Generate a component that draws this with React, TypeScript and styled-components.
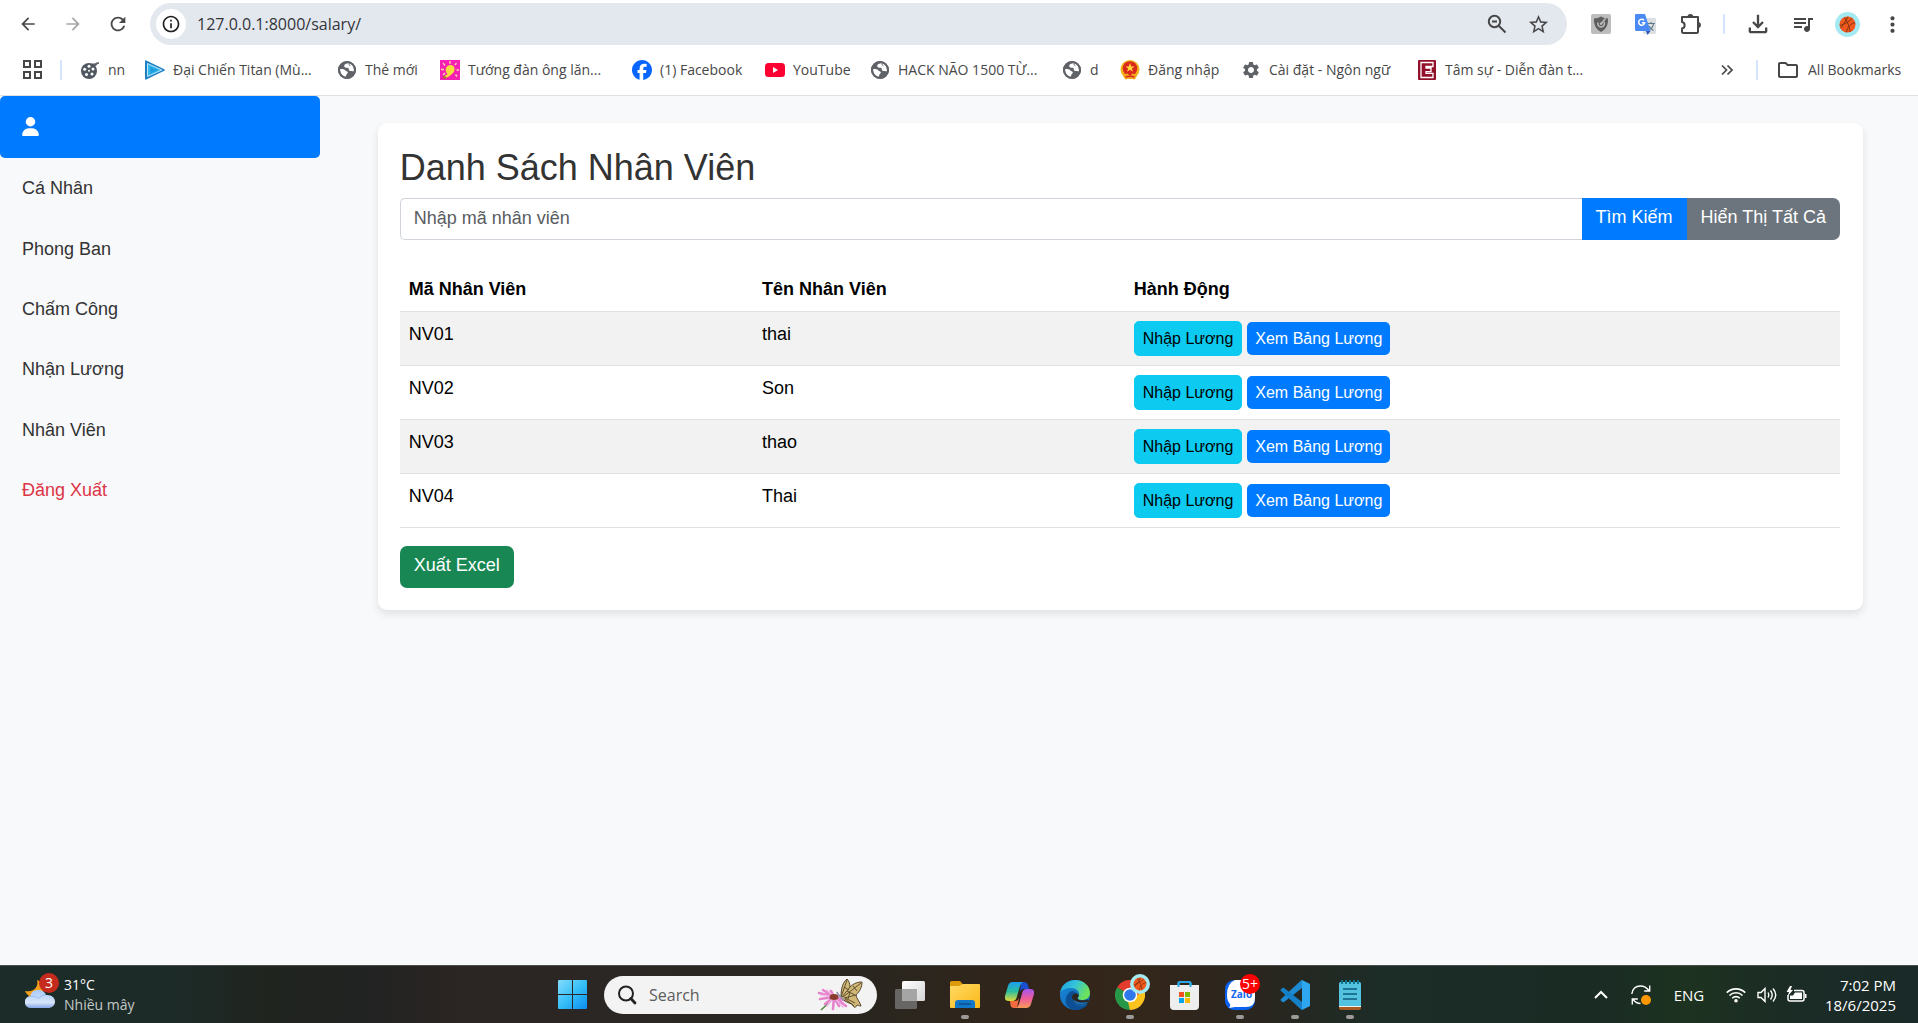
import React from "react";
import styled, { createGlobalStyle, css } from "styled-components";
import {
  MdArrowBack,
  MdArrowForward,
  MdRefresh,
  MdInfoOutline,
  MdStarBorder,
  MdMoreVert,
  MdOutlineFileDownload,
  MdQueueMusic,
  MdSettings,
  MdOutlineFolder,
} from "react-icons/md";
import { FaUser, FaFacebook } from "react-icons/fa6";

const UI_FONT = `"Open Sans", "Noto Sans", sans-serif`;
const PAGE_FONT = `"Liberation Sans", Arial, sans-serif`;

const GlobalStyle = createGlobalStyle`
  *, *::before, *::after { box-sizing: border-box; }
  body { margin: 0; background: #f8f9fb; }
  button, input { font: inherit; color: inherit; margin: 0; }
  svg { display: block; flex: none; }
`;

const Screen = styled.div`
  display: flex;
  flex-direction: column;
  min-height: 100vh;
  font-family: ${PAGE_FONT};
`;

/* ---------- browser chrome ---------- */

const Browser = styled.header`
  background: #fff;
  border-bottom: 1px solid #dfe1e3;
  font-family: ${UI_FONT};
  color: #474747;
`;

const NavBar = styled.div`
  display: flex;
  align-items: center;
  height: 48px;
  padding: 0 3px 0 14px;
`;

const IconButton = styled.button<{ $w?: number; $color?: string }>`
  display: flex;
  align-items: center;
  justify-content: center;
  width: ${(p) => p.$w ?? 45}px;
  height: 32px;
  padding: 0;
  border: 0;
  background: none;
  color: ${(p) => p.$color ?? "#474747"};
`;

const AddressBar = styled.div`
  display: flex;
  flex: 1;
  align-items: center;
  height: 42px;
  margin-left: 18px;
  padding: 0 8px 0 6px;
  border-radius: 21px;
  background: #e3e7ee;
`;

const SiteInfo = styled.button`
  display: flex;
  align-items: center;
  justify-content: center;
  width: 30px;
  height: 30px;
  padding: 0;
  border: 0;
  border-radius: 50%;
  background: #fff;
  color: #1f1f1f;
`;

const UrlInput = styled.input`
  flex: 1;
  min-width: 0;
  padding: 0 0 0 11px;
  border: 0;
  outline: 0;
  background: none;
  font-size: 16px;
  line-height: 24px;
  color: #33353a;
`;

const Separator = styled.span<{ $m: string }>`
  width: 2px;
  height: 20px;
  margin: ${(p) => p.$m};
  border-radius: 1px;
  background: #d3e3fd;
`;

const Extensions = styled.div`
  display: flex;
  align-items: center;
  margin-left: 11px;
`;

const BookmarkBar = styled.nav`
  display: flex;
  align-items: center;
  height: 47px;
  padding: 0 16px 4px 10px;
  font-size: 14px;
  line-height: 20px;
`;

const BookmarkList = styled.div`
  display: flex;
  flex: 1;
  gap: 21px;
`;

const Bookmark = styled.a`
  display: flex;
  align-items: center;
  gap: 8px;
  color: inherit;
  text-decoration: none;
  white-space: nowrap;
`;

const BookmarkIcon = styled.span`
  display: flex;
  align-items: center;
  justify-content: center;
  width: 20px;
  height: 20px;
`;

const BookmarkLabel = styled.span<{ $w: number }>`
  width: ${(p) => p.$w}px;
`;

/* ---------- page ---------- */

const Page = styled.div`
  display: flex;
  flex: 1;
  align-items: flex-start;
  background: #f8f9fb;
  font-size: 18px;
  line-height: 26px;
`;

const Sidebar = styled.nav`
  display: flex;
  flex: none;
  flex-direction: column;
  width: calc(100% / 6);
  height: 424px;
`;

const SideLink = styled.a<{ $active?: boolean; $danger?: boolean }>`
  display: flex;
  flex: 1;
  align-items: center;
  padding: 0 22px;
  border-radius: 5px;
  text-decoration: none;
  color: ${(p) => (p.$danger ? "#dc3545" : "#333")};
  ${(p) =>
    p.$active &&
    css`
      padding: 0 21px 2px;
      background: #007bff;
      color: #fff;
    `}
`;

const Main = styled.main`
  flex: 1;
  min-width: 0;
  padding: 27px 55px 27px 58px;
`;

const Card = styled.section`
  padding: 22px 23px 22px 22px;
  border-radius: 9px;
  background: #fff;
  box-shadow: 0 4px 9px rgba(0, 0, 0, 0.1);
`;

const Title = styled.h1`
  margin: 0 0 8px;
  font-size: 36px;
  font-weight: 400;
  line-height: 45px;
  color: #333;
`;

const SearchForm = styled.form`
  display: flex;
  height: 42px;
  margin-bottom: 27px;
`;

const CodeInput = styled.input`
  flex: 1;
  min-width: 0;
  padding: 0 13px 3px;
  border: 1px solid #ced4da;
  border-right: 0;
  border-radius: 5px 0 0 5px;
  outline: 0;
  background: #fff;
  &::placeholder {
    color: #595c5f;
    opacity: 1;
  }
`;

const tones = {
  primary: css`
    background: #007bff;
    color: #fff;
  `,
  secondary: css`
    background: #6c757d;
    color: #fff;
  `,
  info: css`
    border: 1px solid #0dcaf0;
    background: #0dcaf0;
    color: #000;
  `,
  success: css`
    background: #198754;
    color: #fff;
  `,
};

const Button = styled.button<{ $tone: keyof typeof tones }>`
  padding: 0 14px 3px;
  border: 0;
  border-radius: 7px;
  line-height: 39px;
  white-space: nowrap;
  ${(p) => tones[p.$tone]}
`;

const GroupButton = styled(Button)`
  border-radius: 0;
  &:last-child {
    border-radius: 0 7px 7px 0;
  }
`;

const RowButton = styled(Button)`
  padding: 0 8px;
  border-radius: 5px;
  font-size: 16px;
  line-height: 33px;
`;

const Table = styled.table`
  width: 100%;
  margin-bottom: 18px;
  border-spacing: 0;
  color: #000;
`;

const cell = css`
  padding: 9px;
  border-bottom: 1px solid #dee2e6;
  text-align: left;
  vertical-align: top;
`;

const HeadCell = styled.th`
  ${cell}
  font-weight: 700;
`;

const Cell = styled.td`
  ${cell}
`;

const Row = styled.tr`
  &:nth-child(odd) {
    background: #f2f2f2;
  }
`;

const Actions = styled.div`
  display: flex;
  align-items: center;
  gap: 5px;
`;

/* ---------- taskbar ---------- */

const Taskbar = styled.footer`
  display: grid;
  grid-template-columns: 1fr auto 1fr;
  align-items: center;
  height: 58px;
  padding-left: 4px;
  border-top: 1px solid #4a4d4a;
  background: linear-gradient(
    90deg,
    #1b2c29 0%,
    #1d2b28 9%,
    #20241f 14%,
    #212322 19%,
    #2b2523 24%,
    #2b2724 32%,
    #29261f 45%,
    #33251a 55%,
    #33261b 60%,
    #29261f 66%,
    #1c2c27 72%,
    #1a2b24 83%,
    #1d3220 88%,
    #1b2b26 94%,
    #1a2a28 100%
  );
  font-family: ${UI_FONT};
  color: #fff;
`;

const Weather = styled.button`
  display: flex;
  align-items: center;
  gap: 2px;
  padding: 0 0 0 21px;
  border: 0;
  background: none;
  text-align: left;
  font-size: 14px;
  line-height: 20px;
`;

const Muted = styled.span`
  display: block;
  color: #c5c9c8;
`;

const Apps = styled.div`
  display: flex;
  align-items: center;
`;

const AppButton = styled.button<{ $running?: boolean }>`
  position: relative;
  display: flex;
  align-items: center;
  justify-content: center;
  width: 55px;
  height: 57px;
  padding: 0;
  border: 0;
  background: none;
  ${(p) =>
    p.$running &&
    css`
      &::after {
        content: "";
        position: absolute;
        bottom: 4px;
        left: 24px;
        width: 8px;
        height: 4px;
        border-radius: 2px;
        background: #9c9a98;
      }
    `}
`;

const TaskSearch = styled.label`
  display: flex;
  align-items: center;
  width: 273px;
  height: 38px;
  margin: 0 5px 0 4px;
  padding: 0 14px 0 13px;
  border-radius: 19px;
  background: #f3f3f3;
  color: #222;
`;

const TaskSearchInput = styled.input`
  flex: 1;
  min-width: 0;
  padding: 0 0 0 12px;
  border: 0;
  outline: 0;
  background: none;
  font-size: 16px;
  &::placeholder {
    color: #5c5c5c;
    opacity: 1;
  }
`;

const Badge = styled.span<{ $color: string; $top: number; $left: number }>`
  position: absolute;
  top: ${(p) => p.$top}px;
  left: ${(p) => p.$left}px;
  width: 20px;
  height: 20px;
  border-radius: 10px;
  background: ${(p) => p.$color};
  color: #fff;
  font-size: 14px;
  line-height: 19px;
  text-align: center;
`;

const WeatherIcon = styled.span`
  position: relative;
  width: 37px;
  height: 32px;
`;

const Tray = styled.div`
  display: flex;
  align-items: center;
  justify-content: flex-end;
  padding: 0 22px 0 0;
  font-size: 15px;
  line-height: 20px;
`;

const TrayItem = styled.span<{ $w: number }>`
  display: flex;
  align-items: center;
  justify-content: center;
  width: ${(p) => p.$w}px;
`;

const Clock = styled.time`
  width: 81px;
  text-align: right;
`;

/* ---------- drawings ---------- */

const AppsGrid = () => (
  <svg width="19" height="19" viewBox="0 0 19 19" fill="none" stroke="#474747" strokeWidth="2">
    <path d="M1 1h6v6H1zM12 1h6v6h-6zM1 12h6v6H1zM12 12h6v6h-6z" />
  </svg>
);

const ZoomOutIcon = () => (
  <svg width="20" height="20" viewBox="0 0 20 20" fill="none" stroke="#474747" strokeWidth="2">
    <circle cx="7.5" cy="7.5" r="5.7" />
    <path d="M11.7 11.7L18.5 18.500M5 7.500h5" />
  </svg>
);

const PuzzleIcon = () => (
  <svg width="22" height="22" viewBox="0 0 22 22">
    <path
      d="M2 4h6.500M12.500 4H18v14.500q0 1.500-1.500 1.500H3.500Q2 20 2 18.500V15.500C5.500 15 5.500 9.500 2 9V4H18"
      fill="none"
      stroke="#474747"
      strokeWidth="2"
      strokeLinejoin="round"
    />
    <path d="M7.500 4a2.900 2.900 0 015.800 0zM18 9a2.900 2.900 0 010 5.800z" fill="#474747" />
  </svg>
);

const ShieldIcon = () => (
  <svg width="20" height="20" viewBox="0 0 20 20">
    <rect width="20" height="20" rx="2" fill="#bdbdbd" />
    <path d="M3 4.500c3 0 5-.7 7-2 2 1.300 4 2 7 2 .3 6-1.500 10.500-7 13.500C4.500 15 2.700 10.500 3 4.500z" fill="#5e5e5e" />
    <path d="M7 8.500a3.300 3.300 0 106-.5M10 10L14.500 4.500" fill="none" stroke="#bdbdbd" strokeWidth="1.500" />
    <circle cx="10" cy="9.700" r="1.200" fill="#bdbdbd" />
  </svg>
);

const TranslateIcon = () => (
  <svg width="21" height="21" viewBox="0 0 21 21">
    <rect x="8" y="4" width="13" height="16" rx="1" fill="#dcdfe2" />
    <path d="M12.500 9.500H20M16 8v1.500M18.500 10c-.5 3-2.500 5-5 6M14 12c1 2 2.500 3.500 4.500 4.500" stroke="#607d8b" strokeWidth="1.200" fill="none" />
    <path d="M11 17h4.500L12.500 21z" fill="#3357b5" />
    <path d="M1 0h9l5.500 17H1.500A1.500 1.500 0 010 15.500V1a1 1 0 011-1z" fill="#4a8af4" />
    <path d="M9 6.200A3 3 0 109.700 8.700H6.900" stroke="#fff" strokeWidth="1.500" fill="none" />
  </svg>
);

const Basketball = ({ size }: { size: number }) => (
  <svg width={size} height={size} viewBox="0 0 24 24">
    <circle cx="12" cy="12" r="12" fill="#a5e9f3" />
    <circle cx="12" cy="12" r="7.700" fill="#f2581b" />
    <path d="M4.600 13C9 12 14 9 16.500 6M9 5.200c3 4 5 9 5.500 14M12.500 4.500C10 9 8 12 5.500 15.500M19.500 10.500c-4 0-8 4-8.500 9" stroke="#7a3413" strokeWidth=".9" fill="none" />
  </svg>
);

const Reel = () => (
  <svg width="20" height="20" viewBox="0 0 20 20">
    <path d="M12 4c3 1 4-2 7-1-2 0-2 3-5 3z" fill="#5a6069" stroke="#5a6069" />
    <circle cx="9" cy="11" r="8" fill="#505761" />
    <g fill="#fff">
      <circle cx="9" cy="6.300" r="1.500" />
      <circle cx="13" cy="9" r="1.500" />
      <circle cx="12" cy="14" r="1.500" />
      <circle cx="6.500" cy="14.500" r="1.500" />
      <circle cx="4.700" cy="9.300" r="1.500" />
      <circle cx="9" cy="10.800" r="1" />
    </g>
  </svg>
);

const PlayTriangle = () => (
  <svg width="20" height="20" viewBox="0 0 20 20">
    <path d="M0 1.200Q0 0 1.200.500L19.300 9.200q1 .8 0 1.600L1.200 19.500Q0 20 0 18.800z" fill="#1f7fc0" />
    <path d="M2.500 3.500L16.800 10 2.500 16.500z" fill="#35b9f1" stroke="#b9e6fb" strokeWidth="1" />
    <path d="M5 6.500L13 10l-8 4z" fill="#1f9fe0" />
  </svg>
);

const GlobeIcon = () => (
  <svg width="18" height="18" viewBox="0 0 18 18">
    <circle cx="9" cy="9" r="9" fill="#5f6368" />
    <path d="M11 2.300C8 2.300 6 3.500 6.200 5.200c.2 1.500 1.600 1.400 3.300 1.500 1.500.2 1.200 1.300 1.400 2.300.3 1.200 1.700 1 2.600 1 1 .1 1.700.5 2.400.2C16.500 6 14.500 3 11 2.300z" fill="#fff" />
    <path d="M2.100 8c2.400-.3 4.700.2 5.300 1.400.5 1 1.800.7 2.300 1.600.5 1.200-.8 1.800-1.300 2.600-.3.700 0 1.400-.6 2.200C4 15 1.800 12 2.100 8z" fill="#fff" />
    <path d="M11.500 2.500c-.8 1-.2 2 .8 2.400M10.500 15.500c.5-1.500 2-1.700 3-2.500" stroke="#5f6368" strokeWidth="1" fill="none" />
    <circle cx="9" cy="9" r="8" fill="none" stroke="#5f6368" strokeWidth="2" />
  </svg>
);

const BulbIcon = () => (
  <svg width="20" height="20" viewBox="0 0 20 20">
    <rect width="20" height="20" fill="#f81fb4" />
    <path d="M10 1v3M3 3l2 2.500M16.500 3L15 5M1 9.500h3M16.500 10H19M3 15l2-2M15.500 14.500l1.500 2" stroke="#ffd9a8" strokeWidth="1.300" />
    <path d="M7.500 14C4.500 11 5.500 5.500 10 5s6.500 5 2.500 8.500L9.500 16l-4 2.500L3.500 17z" fill="#f7dd3e" />
    <path d="M3.500 15.500l3.500 2-2 1.500-2-1z" fill="#a3722c" />
  </svg>
);

const YouTubeIcon = () => (
  <svg width="20" height="14" viewBox="0 0 20 14">
    <rect width="20" height="14" rx="3.500" fill="#ff0033" />
    <path d="M8 4l5 3-5 3z" fill="#fff" />
  </svg>
);

const EmblemIcon = () => (
  <svg width="20" height="20" viewBox="0 0 20 20">
    <circle cx="10" cy="9.500" r="9.500" fill="#f3b51c" />
    <circle cx="10" cy="8.500" r="7.300" fill="#d9291c" />
    <path d="M10 3l1.200 3.400h3.400l-2.700 2.100 1.100 3.300-3-2-3 2 1.100-3.300-2.700-2.100h3.400z" fill="#ffd83a" />
    <path d="M3 14.500q3.500-1 7-1t7 1l-2 5q-5-1.500-10 0z" fill="#f5a81c" />
    <path d="M5.500 17q4.500-1.500 9 0" stroke="#d9291c" strokeWidth="1.500" fill="none" />
    <circle cx="10" cy="13.800" r="1.700" fill="#d9291c" />
  </svg>
);

const ForumIcon = () => (
  <svg width="20" height="20" viewBox="0 0 20 20">
    <rect x="1" width="18" height="20" rx="1" fill="#93102a" />
    <path d="M16 2.500H4v15h12v-4.200H9v-1.600h5V8H9V6.500h7z" fill="none" stroke="#fff" strokeWidth="1.300" />
  </svg>
);

const DoubleChevron = () => (
  <svg width="12" height="12" viewBox="0 0 12 12" fill="none" stroke="#474747" strokeWidth="1.700">
    <path d="M1 1.500L5.500 6 1 10.500M6.500 1.500L11 6l-4.500 4.500" />
  </svg>
);

const CloudMoon = () => (
  <svg width="30" height="30" viewBox="0 0 30 30">
    <defs>
      <linearGradient id="cloud" x1="0" y1="0" x2="0" y2="1">
        <stop offset="0" stopColor="#a9cbf8" />
        <stop offset=".7" stopColor="#d6e4fa" />
        <stop offset="1" stopColor="#86a6e8" />
      </linearGradient>
    </defs>
    <path d="M12 1c2 6-3 13-12 11 2 5 8 8 14 5s8-12-2-16z" fill="#f5a01d" />
    <path d="M6 29a6 6 0 01-.5-12C6 13 9 11 13 11c4 0 7 2 8 5 5-.5 9 2.500 9 6.500S27 29 23 29z" fill="url(#cloud)" />
    <path d="M5.500 17.500c3-.5 6 0 8 2 2-2.500 4-3.500 7.500-3.500" stroke="#86aef0" strokeWidth="1" fill="none" opacity=".7" />
  </svg>
);

const WindowsLogo = () => (
  <svg width="29" height="29" viewBox="0 0 29 29">
    <defs>
      <linearGradient id="win" x1="0" y1="0" x2="1" y2="1">
        <stop offset="0" stopColor="#84dcfc" />
        <stop offset=".5" stopColor="#36bff8" />
        <stop offset="1" stopColor="#0a8df0" />
      </linearGradient>
    </defs>
    <path d="M1 0h13v14H0V1a1 1 0 011-1zM15 0h13a1 1 0 011 1v13H15zM0 15h14v14H1a1 1 0 01-1-1zM15 15h14v13a1 1 0 01-1 1H15z" fill="url(#win)" />
  </svg>
);

const SearchGlyph = () => (
  <svg width="20" height="20" viewBox="0 0 20 20" fill="none" stroke="#222" strokeWidth="2">
    <circle cx="9" cy="8.500" r="7" />
    <path d="M13.800 13.500L18 18" strokeWidth="2.800" strokeLinecap="round" />
  </svg>
);

const Butterfly = () => (
  <svg width="46" height="32" viewBox="0 0 46 32">
    <path d="M17 19L4 31" stroke="#4c8a3d" strokeWidth="1.500" />
    <g stroke="#e583cd" strokeWidth="2.600" strokeLinecap="round">
      <path d="M17 18L2 14M17 18L3 20M17 18L8 25M17 18L16 30M17 18L22 27M17 18L29 27M17 18L6 11M17 18L14 12M17 18L30 22" />
    </g>
    <path d="M17 18L4 16M17 18L10 27M17 18L26 28M17 18L10 11" stroke="#f4b5e4" strokeWidth="1.500" strokeLinecap="round" />
    <ellipse cx="17" cy="18" rx="4.500" ry="3" fill="#8a3d2e" />
    <path
      d="M24 18C24 9 26 3 30 0c2 2 3 5 3 8 4-4 8-5 12-5 0 5-2 9-6 13 0 3 4 7 5 11-2 0-3-1-4-1-1 2-2 3-3 2l-2-3c-4-1-8-3-11-7z"
      fill="#d2b877"
      stroke="#54462a"
      strokeWidth="1"
    />
    <path
      d="M24 18L30 1M25 18L33 8M26 18L44 4M27 19l12-3M28 19l10 5M28 20l9 7M30 12l8 4M36 7l4 5M27 8l5 3M33 13l-2 7"
      stroke="#54462a"
      strokeWidth=".9"
      fill="none"
    />
    <path d="M20 13c1 3 3 5 7 8" stroke="#8f90a8" strokeWidth="1.600" fill="none" />
  </svg>
);

const TaskView = () => (
  <svg width="30" height="28" viewBox="0 0 30 28">
    <defs>
      <linearGradient id="tv" x1="0" y1="0" x2="1" y2="1">
        <stop offset="0" stopColor="#fff" />
        <stop offset="1" stopColor="#d5d5d5" />
      </linearGradient>
    </defs>
    <rect x="7" width="23" height="20" rx="1.500" fill="url(#tv)" />
    <rect y="8" width="22" height="20" rx="1.500" fill="#777" opacity=".8" />
    <rect x="7" y="8" width="15" height="12" fill="#a5a5a5" />
  </svg>
);

const Explorer = () => (
  <svg width="30" height="27" viewBox="0 0 30 27">
    <defs>
      <linearGradient id="fold" x1="0" y1="0" x2="1" y2="1">
        <stop offset="0" stopColor="#ffd965" />
        <stop offset="1" stopColor="#fbb917" />
      </linearGradient>
    </defs>
    <path d="M0 1.500Q0 0 1.500 0H10l3 3.500h16V9H0z" fill="#dd9a09" />
    <path d="M0 5h9l4-2h16q1 0 1 1v22q0 1-1 1H1q-1 0-1-1z" fill="url(#fold)" />
    <path d="M5 27v-5q0-3 3-3h14q3 0 3 3v5z" fill="#1277c9" />
    <path d="M9 23h12" stroke="#0b4f8f" strokeWidth="1.500" />
  </svg>
);

const Copilot = () => (
  <svg width="29" height="26" viewBox="0 0 29 26">
    <defs>
      <linearGradient id="cpa" x1="0" y1="0" x2="0" y2="1">
        <stop offset="0" stopColor="#1b9df0" />
        <stop offset=".5" stopColor="#2cbf9e" />
        <stop offset="1" stopColor="#e5d93a" />
      </linearGradient>
      <linearGradient id="cpb" x1="0" y1="0" x2="0" y2="1">
        <stop offset="0" stopColor="#a556ee" />
        <stop offset=".5" stopColor="#ee5c9c" />
        <stop offset="1" stopColor="#fb9a55" />
      </linearGradient>
    </defs>
    <path d="M16 0h3q3 0 4 3l1 4h-5q-3 0-4 3z" fill="#1a4fd0" />
    <path d="M12 26H9q-3 0-3.500-3L5 19h5q3 0 4-3z" fill="#f36b3f" />
    <path d="M8 0h10q-2 1-3 4l-3.500 12q-1 3-4 3H4q-5 0-4-5L3 4Q4 0 8 0z" fill="url(#cpa)" />
    <path d="M21 26H11q2-1 3-4l3.500-12q1-3 4-3H25q5 0 4 5l-3 10q-1 4-5 4z" fill="url(#cpb)" />
  </svg>
);

const Edge = () => (
  <svg width="30" height="30" viewBox="0 0 30 30">
    <defs>
      <linearGradient id="eg1" x1="0" y1="0" x2="1" y2=".4">
        <stop offset="0" stopColor="#1c9be0" />
        <stop offset=".5" stopColor="#34c3dc" />
        <stop offset="1" stopColor="#6ce25a" />
      </linearGradient>
      <linearGradient id="eg2" x1="0" y1="0" x2="1" y2="1">
        <stop offset="0" stopColor="#1a8ee0" />
        <stop offset="1" stopColor="#0c59a4" />
      </linearGradient>
    </defs>
    <circle cx="15" cy="15" r="15" fill="url(#eg2)" />
    <path d="M0 13C1 5 8 0 15 0c9 0 15 6 15 13 0 5-4 7-8 7-3 0-4-1-4-2s1-2 1-4c0-3-3-6-8-6C6 8 1 10 0 13z" fill="url(#eg1)" />
    <path d="M12 16c-1 6 4 10 9 10 3 0 5-1 7-2-3 4-8 6-13 6C8 29 5 24 6 18c.5-3 3-6 6-7 3 0 4 1 5 3-3-.5-4.500.5-5 2z" fill="#0d4f94" />
    <path d="M12 16.500c0 5 4 8.500 9 8 3 0 5-1 6.500-2-1 .8-1 1.500.5.500l1-1.500-1-2c-2 1-4 .9-6 .8-4 0-5-1-4-3 1-1 1-2.500 0-3.300-3-1-6 0-6 2.500z" fill="#2d2620" />
    <path d="M13.500 19.500c1 4.500 6 5.500 10 4.500 2-.5 4-1 4.500-2.500-3 1.500-10 2-14.500-2z" fill="#1a76c6" />
  </svg>
);

const Chrome = () => (
  <svg width="30" height="30" viewBox="0 0 30 30">
    <path d="M15 15L2 7.500A15 15 0 0128 7.500z" fill="#e33b2e" />
    <path d="M15 15L2 7.500A15 15 0 0015 30z" fill="#279847" />
    <path d="M15 15l13-7.500A15 15 0 0115 30z" fill="#fcc31e" />
    <path d="M15 8h13.300L22 16z" fill="#e33b2e" />
    <path d="M2 7.500L8.800 19l6 2.500L10 12z" fill="#279847" />
    <path d="M21.200 18.500L15 30l-2-8z" fill="#fcc31e" />
    <circle cx="15" cy="15" r="7.300" fill="#fff" />
    <circle cx="15" cy="15" r="5.800" fill="#2f78ec" />
  </svg>
);

const Store = () => (
  <svg width="29" height="30" viewBox="0 0 29 30">
    <path d="M8.500 8V3q0-1 1-1h10q1 0 1 1v5" stroke="#2aa7e8" strokeWidth="2.200" fill="none" />
    <path d="M0 5h29v21q0 4-4 4H4q-4 0-4-4z" fill="#eee" />
    <path d="M8.500 3v4M20.500 3v4" stroke="#2aa7e8" strokeWidth="2" />
    <path d="M9 12h5v5H9z" fill="#f25022" />
    <path d="M15 12h5v5h-5z" fill="#7fba00" />
    <path d="M9 18h5v5H9z" fill="#00a4ef" />
    <path d="M15 18h5v5h-5z" fill="#ffb900" />
  </svg>
);

const Zalo = () => (
  <svg width="30" height="30" viewBox="0 0 30 30">
    <rect width="30" height="30" rx="9" fill="#0a62f0" />
    <path d="M10 0h12q8 0 8 8v10q0 9-9 9H10l-6 1q2-2 1-4-3-3-3-9Q2 3 10 0z" fill="#fff" />
    <text x="6" y="18" fontFamily="Open Sans, sans-serif" fontSize="10" fontWeight="700" fill="#1266ef">
      Zalo
    </text>
  </svg>
);

const VSCode = () => (
  <svg width="30" height="30" viewBox="0 0 30 30">
    <path d="M22 0l8 4v22l-8 4z" fill="#2fa6f0" />
    <path d="M22 8L3.500 22.500 1 21q-1-1 0-2L21 .5l1-.5z" fill="#1e8ad2" />
    <path d="M22 22L3.500 7.500 1 9q-1 1 0 2l20 18.500 1 .5z" fill="#1580c8" />
  </svg>
);

const Notepad = () => (
  <svg width="22" height="30" viewBox="0 0 22 30">
    <path d="M0 26h22v2q0 2-2 2H2q-2 0-2-2z" fill="#a65a21" />
    <path d="M0 25h22v2H0z" fill="#f2f2f2" />
    <path d="M0 3.500Q0 2 1.500 2h19Q22 2 22 3.500V26H0z" fill="#53c3e0" />
    <path d="M4 9h14M4 14h14M4 19h14" stroke="#0e5c7a" strokeWidth="1.700" />
    <path d="M3 0v4M7 0v4M11 0v4M15 0v4M19 0v4" stroke="#0e7490" strokeWidth="2" />
  </svg>
);

const ChevronUp = () => (
  <svg width="14" height="9" viewBox="0 0 14 9" fill="none" stroke="#fff" strokeWidth="2">
    <path d="M1 8l6-6 6 6" />
  </svg>
);

const SyncIcon = () => (
  <svg width="20" height="20" viewBox="0 0 20 20" fill="none" stroke="#fff" strokeWidth="1.400">
    <path d="M.8 9C1.500 4 5 1 9.500 1c3.800 0 6.500 2 8.500 4.500M18.700.5v5.500h-5.500M2 14.500c2 2.500 4 4 7.500 4M1.300 19.500V14h5.500" />
    <circle cx="15" cy="15" r="5" fill="#ff9800" stroke="none" />
  </svg>
);

const WifiIcon = () => (
  <svg width="20" height="16" viewBox="0 0 20 16" fill="none" stroke="#fff" strokeWidth="1.600">
    <path d="M.8 5.600c5-5 13.400-5 18.400 0M3.500 8.500c3.600-3.600 9.400-3.600 13 0M6.200 11.200c2.100-2.100 5.500-2.100 7.600 0" />
    <circle cx="10" cy="13.700" r="1.800" fill="#fff" stroke="none" />
  </svg>
);

const SoundIcon = () => (
  <svg width="21" height="16" viewBox="0 0 21 16" fill="none" stroke="#fff" strokeWidth="1.400">
    <path d="M1 5.500h3l4-4v13l-4-4H1z" />
    <path d="M11 5.500q1.500 2.500 0 5M13.500 3.500q3.500 4.500 0 9M16 1.500q5.500 6.500 0 13" />
  </svg>
);

const BatteryIcon = () => (
  <svg width="21" height="17" viewBox="0 0 21 17">
    <path d="M8 4.500h8q2 0 2 2V13q0 2-2 2H4q-2 0-2-2V9" fill="none" stroke="#fff" strokeWidth="1.500" />
    <path d="M9 6.500h7V13H4V9.500h3z" fill="#fff" />
    <path d="M19 8h1.500v4H19z" fill="#fff" />
    <path d="M4 0L.5 6H3L1.500 10.500 7 4H4.500L6 0z" fill="#fff" />
  </svg>
);

/* ---------- data ---------- */

const bookmarks = [
  { label: "nn", w: 16, icon: <Reel /> },
  { label: "Đại Chiến Titan (Mù...", w: 143, icon: <PlayTriangle /> },
  { label: "Thẻ mới", w: 54, icon: <GlobeIcon /> },
  { label: "Tướng đàn ông lăn...", w: 143, icon: <BulbIcon /> },
  { label: "(1) Facebook", w: 84, icon: <FaFacebook size={20} color="#0866ff" /> },
  { label: "YouTube", w: 56, icon: <YouTubeIcon /> },
  { label: "HACK NÃO 1500 TỪ...", w: 143, icon: <GlobeIcon /> },
  { label: "d", w: 9, icon: <GlobeIcon /> },
  { label: "Đăng nhập", w: 72, icon: <EmblemIcon /> },
  { label: "Cài đặt - Ngôn ngữ", w: 127, icon: <MdSettings size={20} color="#5f6368" /> },
  { label: "Tâm sự - Diễn đàn t...", w: 143, icon: <ForumIcon /> },
];

const menu = ["Cá Nhân", "Phong Ban", "Chấm Công", "Nhận Lương", "Nhân Viên"];

const employees = [
  { code: "NV01", name: "thai" },
  { code: "NV02", name: "Son" },
  { code: "NV03", name: "thao" },
  { code: "NV04", name: "Thai" },
];

const BrowserChrome = () => (
  <Browser>
    <NavBar>
      <IconButton $w={28} aria-label="Back"><MdArrowBack size={20} /></IconButton>
      <IconButton $w={62} $color="#a6a6a6" aria-label="Forward"><MdArrowForward size={20} /></IconButton>
      <IconButton $w={28} aria-label="Reload"><MdRefresh size={22} /></IconButton>
      <AddressBar>
        <SiteInfo aria-label="Site information"><MdInfoOutline size={20} /></SiteInfo>
        <UrlInput aria-label="Address" defaultValue="127.0.0.1:8000/salary/" />
        <IconButton $w={40} aria-label="Zoom"><ZoomOutIcon /></IconButton>
        <IconButton $w={42} aria-label="Bookmark this page"><MdStarBorder size={23} /></IconButton>
      </AddressBar>
      <Extensions>
        <IconButton aria-label="Ad blocker"><ShieldIcon /></IconButton>
        <IconButton aria-label="Translate"><TranslateIcon /></IconButton>
        <IconButton aria-label="Extensions"><PuzzleIcon /></IconButton>
        <Separator $m="0 10px" />
        <IconButton aria-label="Downloads"><MdOutlineFileDownload size={28} /></IconButton>
        <IconButton aria-label="Media"><MdQueueMusic size={24} /></IconButton>
        <IconButton aria-label="Profile"><Basketball size={25} /></IconButton>
        <IconButton aria-label="Menu"><MdMoreVert size={25} /></IconButton>
      </Extensions>
    </NavBar>
    <BookmarkBar aria-label="Bookmarks">
      <IconButton $w={44} aria-label="Apps"><AppsGrid /></IconButton>
      <Separator $m="0 18px 0 6px" />
      <BookmarkList>
        {bookmarks.map((b) => (
          <Bookmark href="#" key={b.label}>
            <BookmarkIcon>{b.icon}</BookmarkIcon>
            <BookmarkLabel $w={b.w}>{b.label}</BookmarkLabel>
          </Bookmark>
        ))}
      </BookmarkList>
      <IconButton $w={30} aria-label="More bookmarks"><DoubleChevron /></IconButton>
      <Separator $m="0 18px 0 14px" />
      <Bookmark href="#">
        <MdOutlineFolder size={24} />
        <BookmarkLabel $w={94}>All Bookmarks</BookmarkLabel>
      </Bookmark>
    </BookmarkBar>
  </Browser>
);

const SalaryPage = () => (
  <Page>
    <Sidebar aria-label="Menu">
      <SideLink href="#" $active aria-label="Tài khoản"><FaUser size={19} /></SideLink>
      {menu.map((item) => (
        <SideLink href="#" key={item}>{item}</SideLink>
      ))}
      <SideLink href="#" $danger>Đăng Xuất</SideLink>
    </Sidebar>
    <Main>
      <Card>
        <Title>Danh Sách Nhân Viên</Title>
        <SearchForm onSubmit={(e) => e.preventDefault()}>
          <CodeInput type="text" aria-label="Mã nhân viên" placeholder="Nhập mã nhân viên" />
          <GroupButton type="submit" $tone="primary">Tìm Kiếm</GroupButton>
          <GroupButton type="button" $tone="secondary">Hiển Thị Tất Cả</GroupButton>
        </SearchForm>
        <Table>
          <thead>
            <tr>
              <HeadCell scope="col">Mã Nhân Viên</HeadCell>
              <HeadCell scope="col">Tên Nhân Viên</HeadCell>
              <HeadCell scope="col">Hành Động</HeadCell>
            </tr>
          </thead>
          <tbody>
            {employees.map((e) => (
              <Row key={e.code}>
                <Cell>{e.code}</Cell>
                <Cell>{e.name}</Cell>
                <Cell>
                  <Actions>
                    <RowButton $tone="info">Nhập Lương</RowButton>
                    <RowButton $tone="primary">Xem Bảng Lương</RowButton>
                  </Actions>
                </Cell>
              </Row>
            ))}
          </tbody>
        </Table>
        <Button $tone="success">Xuất Excel</Button>
      </Card>
    </Main>
  </Page>
);

const WindowsTaskbar = () => (
  <Taskbar>
    <Weather>
      <WeatherIcon>
        <CloudMoon />
        <Badge $color="#c42b1c" $top={-6} $left={14}>3</Badge>
      </WeatherIcon>
      <span>
        31°C
        <Muted>Nhiều mây</Muted>
      </span>
    </Weather>
    <Apps>
      <AppButton aria-label="Start"><WindowsLogo /></AppButton>
      <TaskSearch>
        <SearchGlyph />
        <TaskSearchInput type="text" aria-label="Search" placeholder="Search" />
        <Butterfly />
      </TaskSearch>
      <AppButton aria-label="Task view"><TaskView /></AppButton>
      <AppButton aria-label="File Explorer" $running><Explorer /></AppButton>
      <AppButton aria-label="Copilot"><Copilot /></AppButton>
      <AppButton aria-label="Edge"><Edge /></AppButton>
      <AppButton aria-label="Chrome" $running>
        <Chrome />
        <Badge $color="none" $top={8} $left={28}><Basketball size={20} /></Badge>
      </AppButton>
      <AppButton aria-label="Microsoft Store"><Store /></AppButton>
      <AppButton aria-label="Zalo" $running>
        <Zalo />
        <Badge $color="#f00" $top={8} $left={28}>5+</Badge>
      </AppButton>
      <AppButton aria-label="Visual Studio Code" $running><VSCode /></AppButton>
      <AppButton aria-label="Notepad" $running><Notepad /></AppButton>
    </Apps>
    <Tray>
      <TrayItem $w={36}><ChevronUp /></TrayItem>
      <TrayItem $w={44}><SyncIcon /></TrayItem>
      <TrayItem $w={52}>ENG</TrayItem>
      <TrayItem $w={42}><WifiIcon /></TrayItem>
      <TrayItem $w={20}><SoundIcon /></TrayItem>
      <TrayItem $w={38}><BatteryIcon /></TrayItem>
      <Clock>7:02 PM<br />18/6/2025</Clock>
    </Tray>
  </Taskbar>
);

export default function App() {
  return (
    <Screen>
      <GlobalStyle />
      <BrowserChrome />
      <SalaryPage />
      <WindowsTaskbar />
    </Screen>
  );
}
